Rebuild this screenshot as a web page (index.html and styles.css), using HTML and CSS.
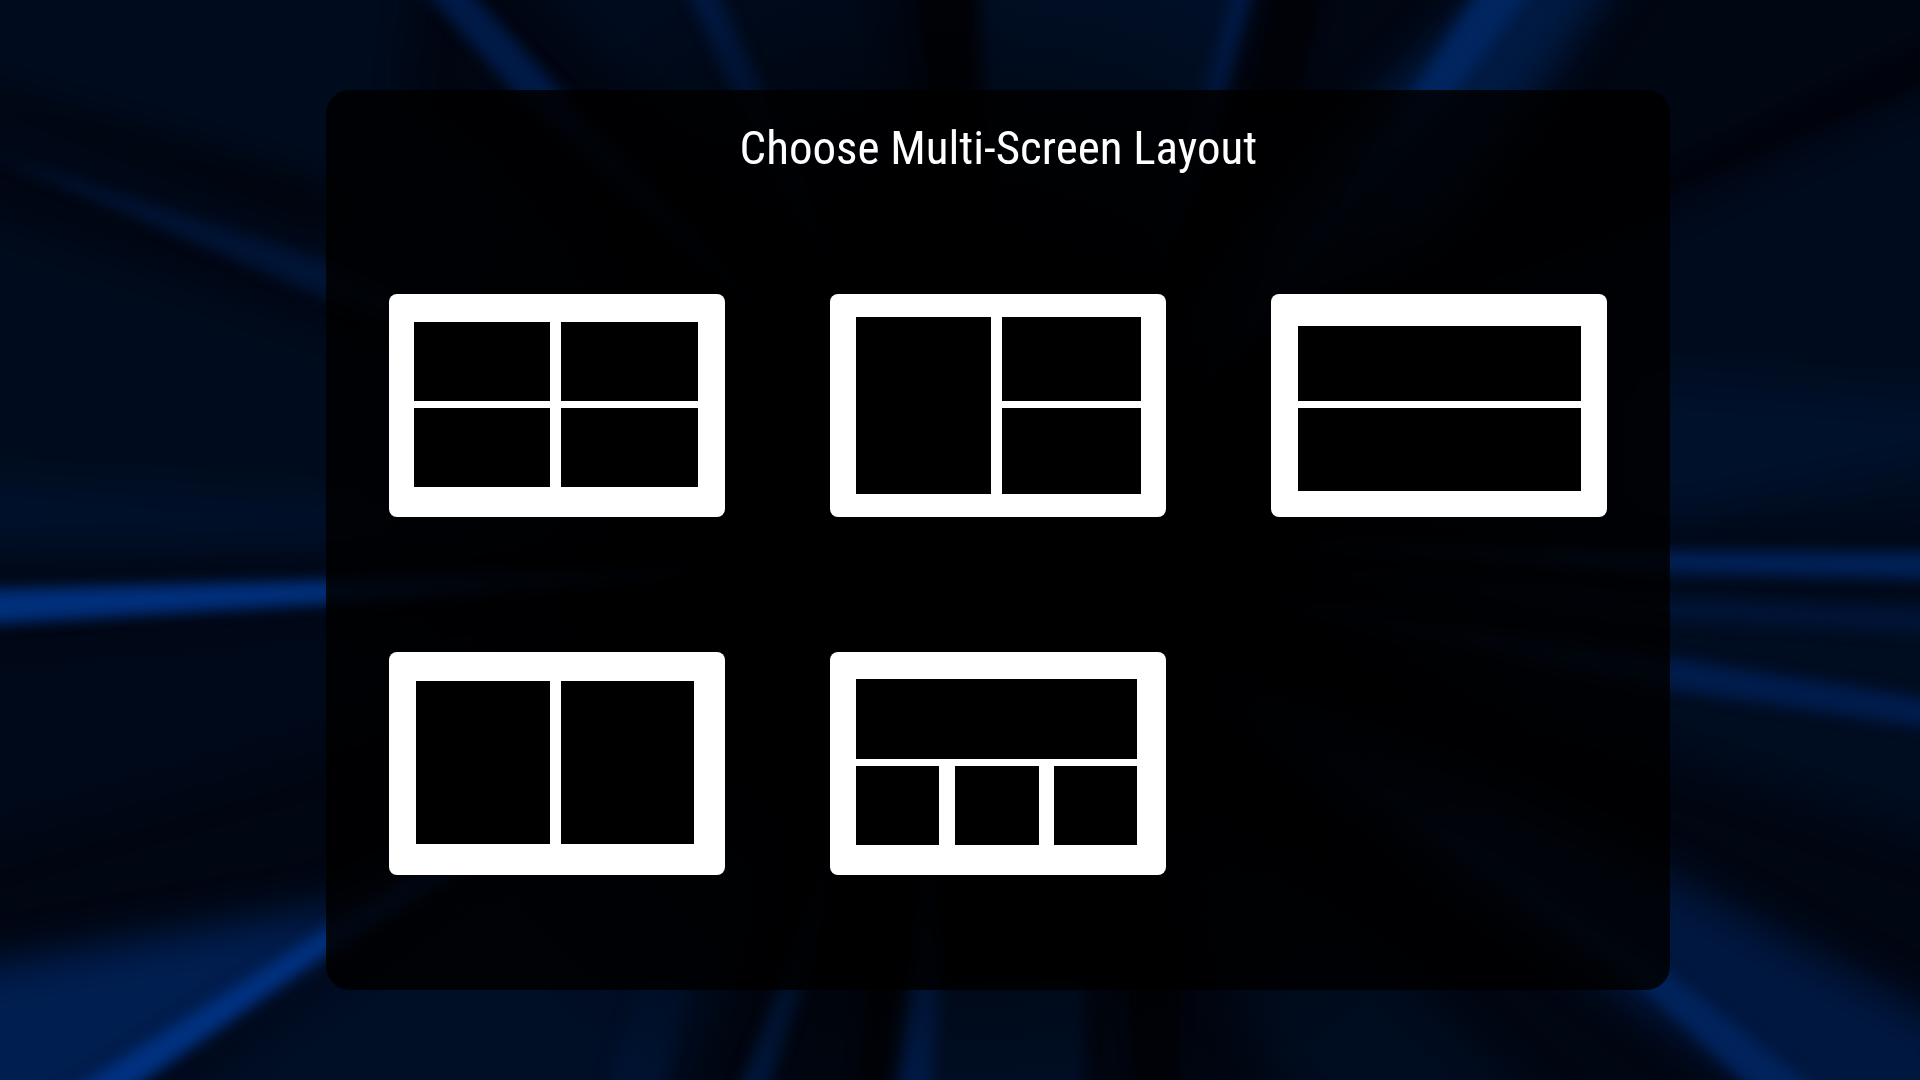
FILE: index.html
```html
<!DOCTYPE html>
<html lang="en">
<head>
  <meta charset="UTF-8">
  <meta name="viewport" content="width=device-width, initial-scale=1">
  <title>Choose Multi-Screen Layout</title>
  <link rel="stylesheet" href="styles.css">
</head>
<body>
  <!-- Light rays behind the dialog -->
  <svg class="backdrop" viewBox="0 0 1920 1080" preserveAspectRatio="xMidYMid slice" aria-hidden="true">
    <defs>
      <filter id="soft" x="-20%" y="-20%" width="140%" height="140%" color-interpolation-filters="sRGB"><feGaussianBlur stdDeviation="7"/></filter>
      <filter id="wide" x="-20%" y="-20%" width="140%" height="140%" color-interpolation-filters="sRGB"><feGaussianBlur stdDeviation="20"/></filter>
      <radialGradient id="core" gradientUnits="userSpaceOnUse" cx="960" cy="540" r="620">
        <stop offset="0.3" stop-color="#000"/>
        <stop offset="1" stop-color="#000" stop-opacity="0"/>
      </radialGradient>
    </defs>
    <rect width="1920" height="1080" fill="#000612"/>
    <g filter="url(#wide)">
      <path fill="#000b1e" d="M-40-40H420L400 100 960 540-40 130Z"/>
      <path fill="#000b1d" d="M-40 200L960 540-40 580Z"/>
      <path fill="#00112c" d="M-40 480L960 540-40 540Z"/>
      <path fill="#00091a" d="M-40 650L960 560-40 850Z"/>
      <path fill="#001e50" d="M-40 970L340 905 620 760 60 1120H-40Z"/>
      <path fill="#000e26" d="M130 1120L960 540 660 1120Z"/>
      <path fill="#000b1e" d="M500-40H880L940 400Z"/>
      <path fill="#00112b" d="M990-40H1255L1000 400Z"/>
      <path fill="#001a42" d="M1510-40H1630L1440 230 1000 500Z"/>
      <path fill="#000b1e" d="M1960 80L960 540 1960 540Z"/>
      <path fill="#00112c" d="M1640 380L1960 400V460L1640 520Z"/>
      <path fill="#000c20" d="M1960 590V850L1000 540Z"/>
      <path fill="#00173f" d="M1640 860L1960 1030V1120H1800L1000 560Z"/>
      <path fill="#000c1f" d="M1300 1120L1000 600 1560 1120Z"/>
      <path fill="#00030a" d="M-40 100L340 240V190L-40 80Z"/>
    </g>
    <g filter="url(#soft)">
      <path fill="#001435" d="M-20 150L330 262 600 400 330 300Z"/>
      <path fill="#002f7b" d="M-20 589L326 580 960 558 326 604-20 625Z"/>
      <path fill="#003180" d="M55 1100L326 928 700 715 326 954 115 1100Z"/>
      <path fill="#001a47" d="M415-20H460L560 90 860 410 512 90Z"/>
      <path fill="#001944" d="M682-20H712L762 90 860 330 732 90Z"/>
      <path fill="#00102a" d="M985-20H1245L1222 90 1100 400 990 300Z"/>
      <path fill="#001b4b" d="M1238-20H1254L1226 100 1140 330 1200 100Z"/>
      <path fill="#00255f" d="M1485-20H1540L1450 100 1130 470 1405 105Z"/>
      <path fill="#00030b" d="M1940 40V75L1660 196 1500 260Z"/>
      <path fill="#002055" d="M1940 551L1660 550 1200 540 1660 574 1940 580Z"/>
      <path fill="#001435" d="M1940 608L1660 598 1200 560 1660 620 1940 634Z"/>
      <path fill="#001c4c" d="M1940 700L1660 656 1200 590 1660 688 1940 730Z"/>
      <path fill="#00235c" d="M1830 1100L1660 966 1280 720 1640 985 1765 1100Z"/>
      <path fill="#00102a" d="M915 980H1085V1100H900Z"/>
      <path fill="#001f54" d="M912 980L930 800 940 980 930 1100H896Z"/>
      <path fill="#00183f" d="M780 980L850 800 805 980 765 1100H735Z"/>
      <path fill="#00122f" d="M640 980H690L660 1100H600Z"/>
      <path fill="#000208" d="M868 980H898L880 1100H855ZM1128 980H1180V1100H1135Z"/>
      <path fill="#000208" d="M915-20H972L978 100H930ZM1275-20H1325L1300 100H1250Z"/>
    </g>
    <rect width="1920" height="1080" fill="url(#core)"/>
  </svg>

  <main class="dialog">
    <h1 class="title">Choose Multi-Screen Layout</h1>
    <div class="layouts">
      <button class="layout" type="button" aria-label="Four screens">
        <svg viewBox="0 0 336 223">
          <path d="M25 28H161V107H25ZM172 28H309V107H172ZM25 114H161V193H25ZM172 114H309V193H172Z"/>
        </svg>
      </button>
      <button class="layout" type="button" aria-label="One large, two stacked">
        <svg viewBox="0 0 336 223">
          <path d="M26 23H161V200H26ZM172 23H311V107H172ZM172 114H311V200H172Z"/>
        </svg>
      </button>
      <button class="layout" type="button" aria-label="Two rows">
        <svg viewBox="0 0 336 223">
          <path d="M27 32H310V107H27ZM27 114H310V197H27Z"/>
        </svg>
      </button>
      <button class="layout" type="button" aria-label="Two columns">
        <svg viewBox="0 0 336 223">
          <path d="M27 29H161V192H27ZM172 29H305V192H172Z"/>
        </svg>
      </button>
      <button class="layout" type="button" aria-label="One large, three below">
        <svg viewBox="0 0 336 223">
          <path d="M26 27H307V107H26ZM26 114H109V193H26ZM125 114H209V193H125ZM224 114H307V193H224Z"/>
        </svg>
      </button>
    </div>
  </main>
</body>
</html>
```

FILE: styles.css
```css
* { margin: 0; padding: 0; box-sizing: border-box; }
body {
  font-family: "Roboto Condensed", Roboto, sans-serif;
  background: #000612;
  color: #fff;
  min-height: 100vh;
  padding: 90px 13% 90px 17%;
  display: flex;
}
.backdrop {
  position: fixed;
  inset: 0;
  width: 100%;
  height: 100%;
  z-index: -1;
}
.dialog {
  flex: 1;
  padding: 28px 63px 115px;
  background: rgba(0, 0, 0, 0.84);
  border-radius: 24px;
}
.title {
  font-size: 47px;
  line-height: 60px;
  font-weight: 400;
  text-align: center;
  margin-bottom: 116px;
}
.layouts {
  display: grid;
  grid-template-columns: repeat(3, 1fr);
  column-gap: 105px;
  row-gap: 135px;
}
.layout {
  display: block;
  background: #fff;
  border: none;
  border-radius: 8px;
  overflow: hidden;
  cursor: pointer;
}
.layout svg {
  display: block;
  width: 100%;
}
.layout:focus-visible {
  outline: 4px solid #2f7bff;
  outline-offset: 6px;
}
```
